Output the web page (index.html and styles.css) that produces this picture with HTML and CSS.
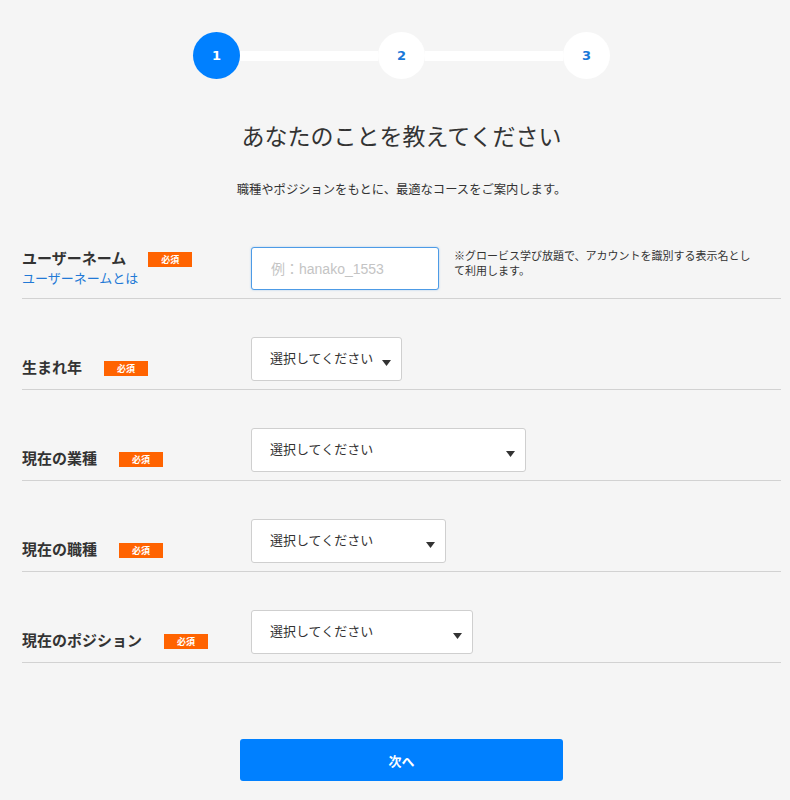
FILE: index.html
```html
<!DOCTYPE html>
<html lang="ja">
<head>
    <meta charset="UTF-8">
    <meta name="viewport" content="width=device-width, initial-scale=1.0">
    <title>あなたのことを教えてください</title>
    <link rel="stylesheet" href="styles.css">
</head>
<body>
    <div class="page">
        <div class="steps">
            <div class="step active">1</div>
            <div class="step-line"></div>
            <div class="step">2</div>
            <div class="step-line"></div>
            <div class="step">3</div>
        </div>

        <h1 class="title">あなたのことを教えてください</h1>
        <p class="lead">職種やポジションをもとに、最適なコースをご案内します。</p>

        <form class="profile-form">
            <div class="row">
                <div class="row-label first">
                    <div><span class="label-text">ユーザーネーム</span><span class="badge">必須</span></div>
                    <a href="#" class="help-link">ユーザーネームとは</a>
                </div>
                <input type="text" class="text-input" placeholder="例：hanako_1553">
                <p class="note">※グロービス学び放題で、アカウントを識別する表示名として利用します。</p>
            </div>

            <div class="row">
                <div class="row-label">
                    <span class="label-text">生まれ年</span><span class="badge">必須</span>
                </div>
                <div class="select w-year">
                    <span>選択してください</span>
                    <svg width="9" height="6" viewBox="0 0 9 6"><path d="M0 0h9L4.5 6z" fill="#333"/></svg>
                </div>
            </div>

            <div class="row">
                <div class="row-label">
                    <span class="label-text">現在の業種</span><span class="badge">必須</span>
                </div>
                <div class="select w-industry">
                    <span>選択してください</span>
                    <svg width="9" height="6" viewBox="0 0 9 6"><path d="M0 0h9L4.5 6z" fill="#333"/></svg>
                </div>
            </div>

            <div class="row">
                <div class="row-label">
                    <span class="label-text">現在の職種</span><span class="badge">必須</span>
                </div>
                <div class="select w-job">
                    <span>選択してください</span>
                    <svg width="9" height="6" viewBox="0 0 9 6"><path d="M0 0h9L4.5 6z" fill="#333"/></svg>
                </div>
            </div>

            <div class="row">
                <div class="row-label">
                    <span class="label-text">現在のポジション</span><span class="badge">必須</span>
                </div>
                <div class="select w-position">
                    <span>選択してください</span>
                    <svg width="9" height="6" viewBox="0 0 9 6"><path d="M0 0h9L4.5 6z" fill="#333"/></svg>
                </div>
            </div>

            <div class="actions">
                <button type="button" class="next-button">次へ</button>
            </div>
        </form>
    </div>
</body>
</html>
```

FILE: styles.css
```css
body {
    font-family: "Noto Sans CJK JP", "Noto Sans", sans-serif;
    background-color: #f5f5f5;
    color: #333;
    margin: 0;
    padding: 0;
}

.page {
    margin: 0 9px 0 22px;
    padding-top: 32px;
}

/* ステップ表示 */
.steps {
    display: flex;
    align-items: center;
    width: 417px;
    margin: 0 auto;
}

.step {
    width: 47px;
    height: 47px;
    border-radius: 50%;
    background-color: white;
    color: #1a78d8;
    font-family: "DejaVu Sans", sans-serif;
    font-weight: bold;
    font-size: 13px;
    display: flex;
    align-items: center;
    justify-content: center;
    flex-shrink: 0;
}

.step.active {
    background-color: #0080ff;
    color: white;
}

.step-line {
    flex: 1;
    height: 10px;
    background-color: white;
}

.title {
    font-size: 23px;
    font-weight: normal;
    line-height: 32px;
    text-align: center;
    margin: 40px 0 0;
    color: #333;
}

.lead {
    font-size: 12.3px;
    line-height: 18px;
    text-align: center;
    margin: 29px 0 0;
}

.profile-form {
    margin-top: 11px;
}

.row {
    display: flex;
    align-items: flex-start;
    padding: 38px 0 8px;
    border-bottom: 1px solid #d2d2d2;
}

.row-label {
    width: 229px;
    flex-shrink: 0;
    padding-top: 19px;
    line-height: 20px;
}

.row-label.first {
    padding-top: 0;
}

.label-text {
    font-size: 15px;
    font-weight: bold;
    color: #333;
}

.badge {
    display: inline-block;
    width: 44px;
    height: 15px;
    line-height: 15px;
    margin-left: 22px;
    background-color: #ff6300;
    color: white;
    font-size: 9px;
    font-weight: bold;
    text-align: center;
    vertical-align: 1px;
}

.help-link {
    display: block;
    font-size: 13px;
    color: #2279d6;
    text-decoration: none;
}

.text-input {
    width: 188px;
    height: 43px;
    box-sizing: border-box;
    border: 1px solid #4d9be6;
    border-radius: 3px;
    box-shadow: 0 0 2px rgba(77, 155, 230, 0.5);
    background-color: white;
    padding: 0 19px;
    font-family: "Liberation Sans", "Noto Sans CJK JP", sans-serif;
    font-size: 14px;
    outline: none;
}

.text-input::placeholder {
    color: #c4c4c4;
}

.note {
    width: 300px;
    margin: 1px 0 0 15px;
    font-size: 11px;
    line-height: 15px;
    color: #333;
}

.select {
    height: 44px;
    box-sizing: border-box;
    border: 1px solid #cfcfcf;
    border-radius: 3px;
    background-color: white;
    display: flex;
    align-items: center;
    justify-content: space-between;
    padding: 0 10px 0 18px;
    font-size: 13px;
    color: #333;
}

.select span {
    margin-bottom: 3px;
}

.select svg {
    margin-top: 7px;
}

.w-year { width: 151px; }
.w-industry { width: 275px; }
.w-job { width: 195px; }
.w-position { width: 222px; }

.actions {
    display: flex;
    justify-content: center;
    margin-top: 76px;
}

.next-button {
    width: 323px;
    height: 42px;
    border: none;
    border-radius: 3px;
    background-color: #0080ff;
    color: white;
    font-family: "Noto Sans CJK JP", sans-serif;
    font-size: 13px;
    font-weight: bold;
    cursor: pointer;
}
```
